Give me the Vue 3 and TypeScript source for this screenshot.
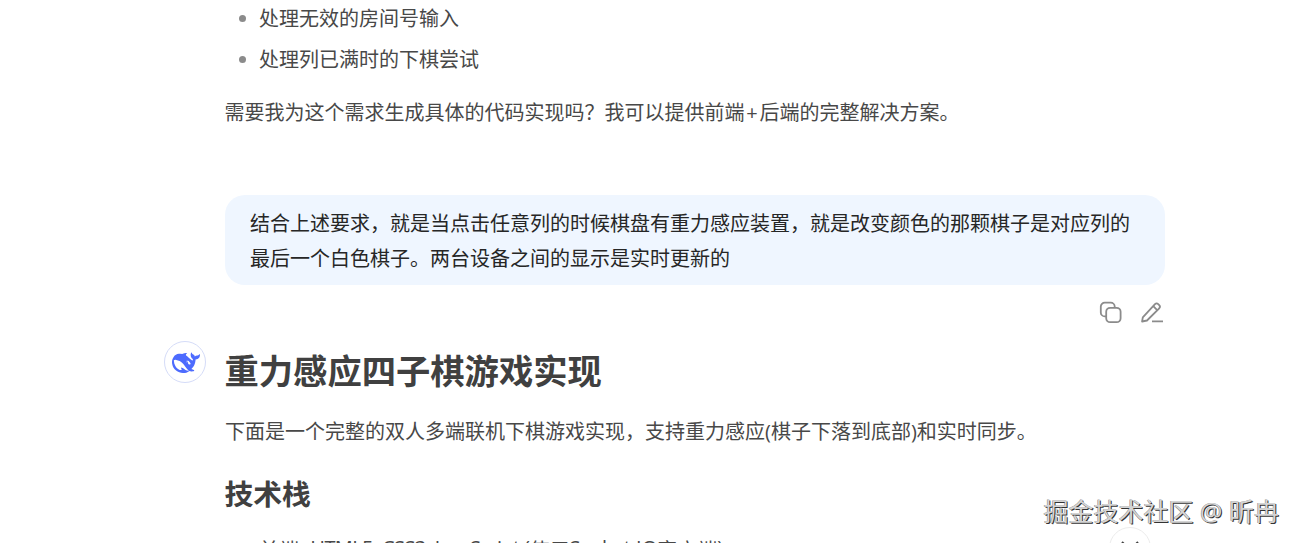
<script setup lang="ts">
interface Run {
  text: string
  kind: 'cjk' | 'tight' | 'latin'
}

const edgeCases: string[] = ['处理无效的房间号输入', '处理列已满时的下棋尝试']
const prompt: string[] = [
  '结合上述要求，就是当点击任意列的时候棋盘有重力感应装置，就是改变颜色的那颗棋子是对应列的',
  '最后一个白色棋子。两台设备之间的显示是实时更新的',
]
const stack: Run[] = [
  { text: '前端', kind: 'cjk' },
  { text: ': HTML5, CSS3, JavaScript (', kind: 'tight' },
  { text: '使用', kind: 'cjk' },
  { text: 'Socket.IO', kind: 'latin' },
  { text: '客户端', kind: 'cjk' },
  { text: ')', kind: 'latin' },
]
</script>

<template>
  <main class="page">
    <div class="thread">
      <ul class="list">
        <li v-for="item in edgeCases" :key="item"><span>{{ item }}</span></li>
      </ul>
      <p class="closing">需要我为这个需求生成具体的代码实现吗？我可以提供前端<span class="plus">+</span>后端的完整解决方案。</p>

      <section class="bubble">
        <div v-for="line in prompt" :key="line">{{ line }}</div>
      </section>
      <div class="actions">
        <svg width="24" height="24" viewBox="0 0 24 24" fill="none" stroke="#8b8b8b" stroke-width="1.8">
          <rect x="7.2" y="7.8" width="14.4" height="14.4" rx="4" />
          <path d="M7.2 16.4H5.8a4 4 0 0 1-4-4V6.6a4 4 0 0 1 4-4h5.9a4 4 0 0 1 4 4v1.2" />
        </svg>
        <svg width="24" height="24" viewBox="0 0 24 24" fill="none" stroke="#8b8b8b" stroke-width="1.8" stroke-linejoin="round">
          <path d="M2.8 17.3 15 4.2a2.3 2.3 0 0 1 3.2 0l1 1a2.3 2.3 0 0 1 0 3.2L7 20.5l-4.9 1z" />
          <path d="m13.3 6.2 4.1 4.1M12 21.4h11" />
        </svg>
      </div>

      <article class="answer">
        <div class="avatar">
          <svg width="28" height="28" viewBox="0 0 24 24" fill="#4d6bfe">
            <path d="M23.748 4.482c-.254-.124-.364.113-.512.234-.051.039-.094.09-.137.136-.372.397-.806.657-1.373.626-.829-.046-1.537.214-2.163.848-.133-.782-.575-1.248-1.247-1.548-.352-.156-.708-.311-.955-.65-.172-.241-.219-.51-.305-.774-.055-.16-.11-.323-.293-.35-.2-.031-.278.136-.356.276-.313.572-.434 1.202-.422 1.84.027 1.436.633 2.58 1.838 3.393.137.093.172.187.129.323-.082.28-.18.552-.266.833-.055.179-.137.217-.329.14a5.526 5.526 0 01-1.736-1.18c-.857-.828-1.631-1.742-2.597-2.458a11.365 11.365 0 00-.689-.471c-.985-.957.13-1.743.388-1.836.27-.098.093-.432-.779-.428-.872.004-1.67.295-2.687.684a3.055 3.055 0 01-.465.137 9.597 9.597 0 00-2.883-.102c-1.885.21-3.39 1.102-4.497 2.623C.082 8.606-.231 10.684.152 12.85c.403 2.284 1.569 4.175 3.36 5.653 1.858 1.533 3.997 2.284 6.438 2.14 1.482-.085 3.133-.284 4.994-1.86.47.234.962.327 1.78.397.63.059 1.236-.03 1.705-.128.735-.156.684-.837.419-.961-2.155-1.004-1.682-.595-2.113-.926 1.096-1.296 2.746-2.642 3.392-7.003.05-.347.007-.565 0-.845-.004-.17.035-.237.23-.256a4.173 4.173 0 001.545-.475c1.396-.763 1.96-2.015 2.093-3.517.02-.23-.004-.467-.247-.588zM11.581 18c-2.089-1.642-3.102-2.183-3.52-2.16-.392.024-.321.471-.235.763.09.288.207.486.371.739.114.167.192.416-.113.603-.673.416-1.842-.14-1.897-.167-1.361-.802-2.5-1.86-3.301-3.307-.774-1.393-1.224-2.887-1.298-4.482-.02-.386.093-.522.477-.592a4.696 4.696 0 011.529-.039c2.132.312 3.946 1.265 5.468 2.774.868.86 1.525 1.887 2.202 2.891.72 1.066 1.494 2.082 2.48 2.914.348.292.625.514.891.677-.802.09-2.14.11-3.054-.614zm1-6.44a.306.306 0 01.415-.287.302.302 0 01.2.288.306.306 0 01-.31.307.303.303 0 01-.304-.308zm3.11 1.596c-.2.081-.399.151-.59.16a1.245 1.245 0 01-.798-.254c-.274-.23-.47-.358-.552-.758a1.73 1.73 0 01.016-.588c.07-.327-.008-.537-.239-.727-.187-.156-.426-.199-.688-.199a.559.559 0 01-.254-.078c-.11-.054-.2-.19-.114-.358.028-.054.16-.186.192-.21.356-.202.767-.136 1.146.016.352.144.618.408 1.001.782.391.451.462.576.685.914.176.265.336.537.445.848.067.195-.019.354-.25.452z" />
          </svg>
        </div>
        <h1>重力感应四子棋游戏实现</h1>
        <p class="summary">下面是一个完整的双人多端联机下棋游戏实现，支持重力感应(棋子下落到底部)和实时同步。</p>
        <h2>技术栈</h2>
        <ul class="list stack">
          <li><span><i v-for="run in stack" :key="run.text" :class="run.kind">{{ run.text }}</i></span></li>
        </ul>
      </article>
    </div>

    <div class="scroll-button">
      <svg width="24" height="24" viewBox="0 0 24 24" fill="none" stroke="#404040" stroke-width="2">
        <path d="m4 2 8 8 8-8" />
      </svg>
    </div>
    <div class="watermark">掘金技术社区 @ 昕冉</div>
  </main>
</template>

<style>
body {
  background: #fff;
}
</style>

<style scoped>
.page {
  position: relative;
  height: 543px;
  overflow: hidden;
  font-family: 'Open Sans', 'Noto Sans CJK SC', sans-serif;
  font-size: 20px;
  font-weight: 400;
  color: #484848;
}
.thread {
  width: 940px;
  margin-left: 225px;
}
.list {
  margin: 0;
  padding: 0;
  list-style: none;
}
.list li {
  display: flex;
  align-items: center;
  height: 36px;
  margin-bottom: 5px;
  white-space: nowrap;
}
.list li span {
  padding-bottom: 2px;
}
.list li::before {
  content: '';
  width: 7px;
  height: 7px;
  margin: 0 13px 0 14px;
  border-radius: 50%;
  background: #8b8b8b;
}
.closing {
  height: 36px;
  margin: 18px 0 0;
  line-height: 36px;
  text-indent: -0.5px;
  white-space: nowrap;
}
.plus {
  display: inline-block;
  width: 15px;
  text-align: center;
  text-indent: 0;
}
.bubble {
  box-sizing: border-box;
  height: 90px;
  margin-top: 64px;
  padding: 11px 25px 9px;
  border-radius: 20px;
  background: #eff6ff;
  color: #262626;
  line-height: 35px;
  white-space: nowrap;
}
.actions {
  display: flex;
  justify-content: flex-end;
  gap: 17px;
  height: 24px;
  margin: 15px 1px 0 0;
}
.answer {
  position: relative;
  padding-top: 22px;
}
.avatar {
  position: absolute;
  left: -61px;
  top: 17px;
  box-sizing: border-box;
  width: 42px;
  height: 42px;
  padding: 7px 0 0 7px;
  border: 1px solid #d5dcf8;
  border-radius: 50%;
}
.avatar svg {
  display: block;
}
h1 {
  margin: 0 0 0 -0.5px;
  font-size: 34.3px;
  line-height: 50px;
  font-weight: 700;
  color: #404040;
}
.summary {
  margin: 18px 0 0;
  line-height: 36px;
  white-space: nowrap;
}
h2 {
  margin: 23px 0 0 -0.5px;
  font-size: 28.8px;
  line-height: 42px;
  font-weight: 700;
  color: #404040;
}
.stack {
  margin-top: 19px;
}
.stack i {
  display: inline-block;
  font-style: normal;
  white-space: pre;
}
.stack .tight {
  margin: 0 0 3px 2px;
  letter-spacing: -0.6px;
}
.stack .latin {
  margin-bottom: 3px;
}
.stack .tight,
.stack .latin {
  transform: translateY(-3px);
}
.stack li::before {
  visibility: hidden;
}
.scroll-button {
  position: absolute;
  left: 1109px;
  top: 527px;
  box-sizing: border-box;
  width: 42px;
  height: 42px;
  padding: 12px 8px;
  border: 1px solid #ececec;
  border-radius: 50%;
  background: #fff;
}
.watermark {
  position: absolute;
  left: 1043.5px;
  top: 493px;
  font-size: 25px;
  line-height: 36px;
  color: #d4d4d4;
  text-shadow: 1px 1px 0 #333, -0.5px 0 0 #888;
  white-space: nowrap;
}
</style>
